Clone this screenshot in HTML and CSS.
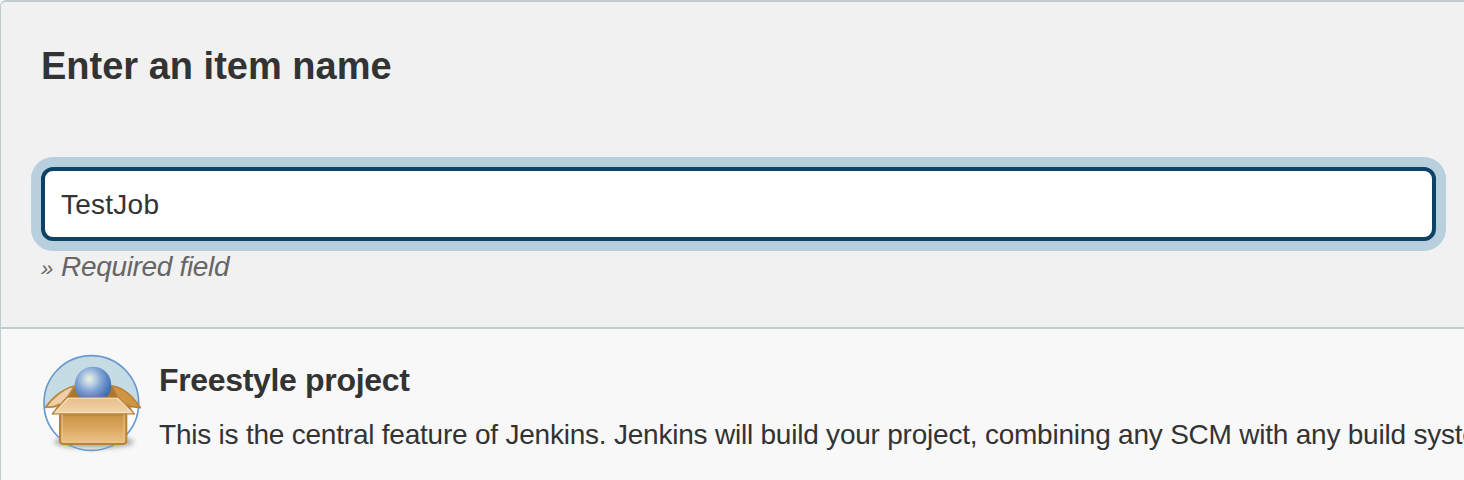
FILE: index.html
```html
<!DOCTYPE html>
<html lang="en">
<head>
<meta charset="utf-8">
<title>New Item</title>
<link rel="stylesheet" href="styles.css">
</head>
<body>
<main class="panel">
  <section class="name-section">
    <h1 class="heading">Enter an item name</h1>
    <input class="name-input" type="text" value="TestJob" aria-label="Item name">
    <div class="hint"><span class="hint-mark">»</span> <span class="hint-text">Required field</span></div>
  </section>
  <section class="item">
    <svg class="item-icon" viewBox="30 24 312 306" aria-hidden="true">
      <defs>
        <radialGradient id="ball" cx=".4" cy=".34" r=".68">
          <stop offset="0" stop-color="#eef2e2"/><stop offset=".2" stop-color="#c4d6e2"/><stop offset=".5" stop-color="#7fa3d4"/><stop offset=".85" stop-color="#4676b8"/><stop offset="1" stop-color="#3c68a8"/>
        </radialGradient>
        <linearGradient id="front" x1="0" y1="0" x2="0" y2="1">
          <stop offset="0" stop-color="#c9913f"/><stop offset=".5" stop-color="#d9a660"/><stop offset="1" stop-color="#edc58a"/>
        </linearGradient>
        <linearGradient id="flap" x1="0" y1="0" x2="0" y2="1">
          <stop offset="0" stop-color="#e6bd8a"/><stop offset="1" stop-color="#f3d5aa"/>
        </linearGradient>
        <filter id="soft" x="-20%" y="-80%" width="140%" height="260%"><feGaussianBlur stdDeviation="8"/></filter>
        <filter id="edge" x="-5%" y="-5%" width="110%" height="110%"><feGaussianBlur stdDeviation="1.6"/></filter>
        <clipPath id="sky"><rect x="30" y="20" width="312" height="168"/></clipPath>
      </defs>
      <circle cx="184" cy="174" r="142" fill="#fff"/>
      <circle cx="184" cy="174" r="142" fill="#c6dce4" clip-path="url(#sky)"/>
      <ellipse cx="192" cy="291" rx="120" ry="19" fill="#666" opacity=".55" filter="url(#soft)"/>
      <circle cx="184" cy="174" r="142" fill="none" stroke="#6798d0" stroke-width="5"/>
      <g filter="url(#edge)">
        <path d="M105 160 135 123H247L276 160Z" fill="#ad752a" stroke="#b98535" stroke-width="4"/>
        <circle cx="189" cy="120" r="55" fill="url(#ball)"/>
        <path d="M134 123C104 129 68 156 47 187L72 185 88 178 69 207 112 157Z" fill="#efcfaa" stroke="#b98739" stroke-width="5" stroke-linejoin="round"/>
        <path d="M247 123C281 127 311 158 331 188L302 184 294 180 311 207 263 157Z" fill="#cf9542" stroke="#b98139" stroke-width="5" stroke-linejoin="round"/>
        <rect x="90" y="200" width="199" height="97" rx="10" fill="url(#front)" stroke="#b98432" stroke-width="6"/>
        <path d="M97 210H282" stroke="#b67b2c" stroke-width="8" opacity=".45"/>
        <path d="M97 208V290H282V208" fill="none" stroke="#edc68b" stroke-width="4" opacity=".65"/>
        <path d="M111 158H265L312 206H68Z" fill="url(#flap)" stroke="#ba8840" stroke-width="5" stroke-linejoin="round"/>
        <path d="M114 160H263L305 203H75Z" fill="none" stroke="#fae6cb" stroke-width="4" opacity=".85"/>
      </g>
    </svg>
    <div class="item-body">
      <h2 class="item-title">Freestyle project</h2>
      <p class="item-desc">This is the central feature of Jenkins. Jenkins will build your project, combining any SCM with any build system</p>
    </div>
  </section>
</main>
</body>
</html>
```
FILE: styles.css
```css
* { box-sizing: border-box; }
html { background: #f8f8f8; }
body {
  margin: 0;
  height: 480px;
  overflow: hidden;
  color: #333;
  font-family: "Liberation Sans", Arial, sans-serif;
}
.panel {
  width: 1476px;
  height: 480px;
  border: 2px solid #c0cbd0;
  border-left-width: 1px;
  border-bottom: 0;
  border-radius: 6px 6px 0 0;
  overflow: hidden;
  background: #f8f8f8;
}
.name-section {
  height: 327px;
  padding: 42px 40px 0;
  border-bottom: 2px solid #c0cbd0;
  background: #f1f1f1;
}
.heading {
  margin: 0 0 79px;
  font-size: 38px;
  line-height: 44px;
  letter-spacing: 0;
  white-space: nowrap;
}
.name-input {
  display: block;
  width: 1395px;
  height: 74px;
  padding: 2px 16px 0;
  border: 4px solid #0b4266;
  border-radius: 12px;
  outline: 0;
  background: #fff;
  box-shadow: 0 0 0 10px #b8cfde;
  color: #333;
  font: 28px "Liberation Sans", Arial, sans-serif;
  letter-spacing: 0.25px;
}
.hint {
  margin-top: 10px;
  color: #666;
  font-size: 28px;
  font-style: italic;
  line-height: 32px;
  white-space: nowrap;
}
.hint-mark { font-size: 22px; }
.hint-text { letter-spacing: -0.33px; }
.item {
  display: flex;
  gap: 15px;
  padding: 24px 0 0 39px;
}
.item-icon {
  flex: none;
  width: 104px;
  height: 102px;
}
.item-body { padding-top: 9px; }
.item-title {
  margin: 0 0 19px;
  font-size: 32px;
  line-height: 36px;
  letter-spacing: -0.33px;
  white-space: nowrap;
}
.item-desc {
  margin: 0;
  font-size: 28px;
  line-height: 36px;
  letter-spacing: -0.22px;
  white-space: nowrap;
}
```
